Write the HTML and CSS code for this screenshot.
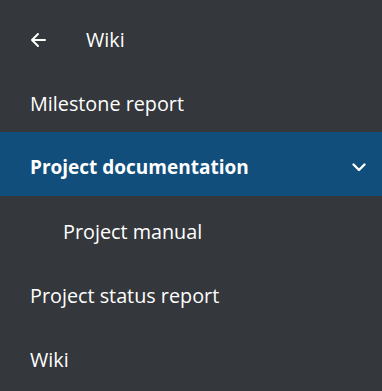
FILE: index.html
```html
<!DOCTYPE html>
<html>
<head>
<link rel="stylesheet" href="styles.css">
</head>
<body>
<nav class="nav">
  <div class="nav-head">
    <svg class="back" width="18" height="16" viewBox="0 0 18 16">
      <path d="M16 8H3M9 2L3 8l6 6" fill="none" stroke="#fff" stroke-width="2" stroke-linecap="round" stroke-linejoin="round"/>
    </svg>
    <span class="head-title">Wiki</span>
  </div>
  <div class="nav-item">Milestone report</div>
  <div class="nav-item active">
    <span>Project documentation</span>
    <svg class="chevron" width="16" height="10" viewBox="0 0 16 10">
      <path d="M2.5 2.5l5.5 5.5 5.5-5.5" fill="none" stroke="#fff" stroke-width="2.4" stroke-linecap="round" stroke-linejoin="round"/>
    </svg>
  </div>
  <div class="nav-item sub">Project manual</div>
  <div class="nav-item">Project status report</div>
  <div class="nav-item">Wiki</div>
</nav>
</body>
</html>
```

FILE: styles.css
```css
html, body {
  margin: 0;
  padding: 0;
  background: #34373b;
}

.nav {
  font-family: "Open Sans", sans-serif;
  font-size: 19.8px;
  color: #fff;
}

.nav-head {
  display: flex;
  align-items: center;
  height: 68px;
  padding: 11px 0 0 29px;
  box-sizing: border-box;
}

.back {
  display: block;
}

.head-title {
  margin-left: 39px;
}

.nav-item {
  display: flex;
  align-items: center;
  justify-content: space-between;
  height: 64px;
  padding: 6px 15px 0 30px;
  box-sizing: border-box;
}

.nav-item.active {
  background: #124e7c;
  font-weight: bold;
  font-size: 19px;
}

.nav-item.sub {
  padding-left: 63px;
}

.chevron {
  display: block;
}
```
